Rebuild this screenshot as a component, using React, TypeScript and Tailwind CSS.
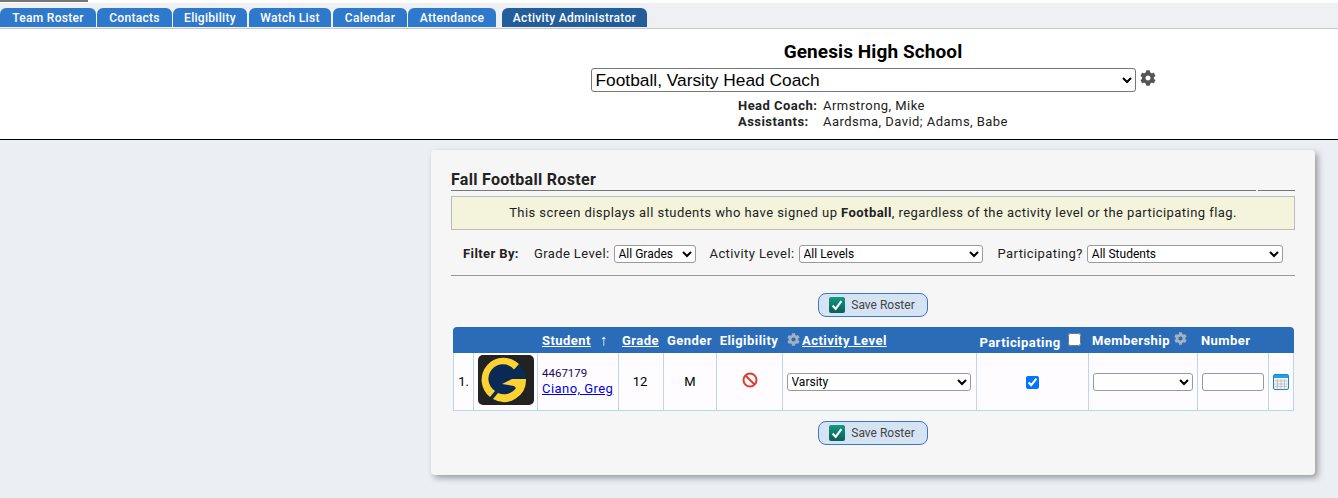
import { FaCog } from 'react-icons/fa';

const tabs = [
  { label: 'Team Roster', w: 'w-[96px]', gap: 'mr-[1px]' },
  { label: 'Contacts', w: 'w-[75px]', gap: 'mr-[1px]' },
  { label: 'Eligibility', w: 'w-[74px]', gap: 'mr-[2px]' },
  { label: 'Watch List', w: 'w-[82px]', gap: 'mr-[2px]' },
  { label: 'Calendar', w: 'w-[74px]', gap: 'mr-[1px]' },
  { label: 'Attendance', w: 'w-[88px]', gap: 'mr-[6px]' },
];

function SaveButton() {
  return (
    <div className="flex justify-center">
      <button className="flex items-center justify-center gap-[6px] pr-[2px] w-[110px] h-[24px] rounded-[8px] border border-[#3a78c9] bg-[#d5e3f3] text-[12px] text-[#444]">
        <span className="w-[16px] h-[16px] rounded-[2px] bg-gradient-to-b from-[#0f9a84] to-[#0a5f57] flex items-center justify-center">
          <svg viewBox="0 0 16 16" className="w-[14px] h-[14px]">
            <path d="M3 8.5 L6.5 12.5 L13 3.5" fill="none" stroke="#fff" strokeWidth="2.4" />
          </svg>
        </span>
        Save Roster
      </button>
    </div>
  );
}

function Logo() {
  return (
    <svg viewBox="0 0 56 50" className="w-[56px] h-[50px] block">
      <rect width="56" height="50" rx="5" fill="#222222" />
      <circle cx="26" cy="25" r="22" fill="#0a2a55" />
      <path d="M41 9 A22 22 0 1 0 12 42 L17 36 A14.5 14.5 0 1 1 36 14.5 Z" fill="#fdd231" />
      <path d="M24 29 L34 24 H48 A22 22 0 0 1 15 44 L20 38 A14.5 14.5 0 0 0 38 33 L36 31 Z" fill="#fdd231" />
    </svg>
  );
}

function Prohibited() {
  return (
    <svg viewBox="0 0 16 16" className="w-[16px] h-[16px] mx-auto">
      <circle cx="8" cy="8" r="6.5" fill="none" stroke="#e23b2e" strokeWidth="2" />
      <path d="M3.5 3.5 L12.5 12.5" stroke="#e23b2e" strokeWidth="2" />
    </svg>
  );
}

function CalendarIcon() {
  return (
    <svg viewBox="0 0 16 16" className="w-[16px] h-[16px] mx-auto">
      <rect x="0.5" y="0.5" width="15" height="15" rx="1.5" fill="#f2f2f2" stroke="#1b86c8" />
      <rect x="1" y="1" width="14" height="3" fill="#22a0e6" />
      <path
        d="M4.5 5 V14.5 M8 5 V14.5 M11.5 5 V14.5 M1.5 7 H14.5 M1.5 10 H14.5 M1.5 12.5 H14.5"
        stroke="#b5b5b5"
        strokeWidth="0.7"
      />
    </svg>
  );
}

const selectCls = 'h-[18px] border border-[#9a9a9a] rounded-[3px] bg-white text-[12px] tracking-normal text-black';
const cellCls = 'border-r border-b border-[#b9d6f2] text-center align-middle p-0';

export default function App() {
  return (
    <div className="min-h-[498px] bg-[#ebeef3] text-[#222] font-['Roboto',sans-serif] overflow-hidden">
      {/* top strip */}
      <div className="h-[3px] bg-white">
        <div className="w-[88px] h-[2px] bg-[#777]" />
      </div>
      <div className="h-[25px] bg-[#eef0f4] border-b border-[#c8c8c8] box-content flex items-end">
        {tabs.map((t) => (
          <div
            key={t.label}
            className={`${t.w} ${t.gap} h-[19px] mb-[1px] rounded-t-[6px] bg-[#2f79cd] text-white text-[12px] font-medium tracking-[0.3px] flex items-center justify-center`}
          >
            {t.label}
          </div>
        ))}
        <div className="w-[145px] h-[19px] mb-[1px] rounded-t-[6px] bg-[#245e9a] text-white text-[12px] font-medium tracking-[0.3px] flex items-center justify-center">
          Activity Administrator
        </div>
      </div>

      {/* school header */}
      <div className="h-[111px] bg-white border-b border-black flex flex-col items-center pl-[408px]">
        <div className="mt-[12px] text-[19px] leading-[22px] font-bold tracking-[0.1px] text-black">Genesis High School</div>
        <div className="mt-[5px] flex items-start">
          <select className="w-[545px] h-[24px] border border-[#777] rounded-[3px] bg-white text-[17.33px] text-black font-['Liberation_Sans',sans-serif]">
            <option>Football, Varsity Head Coach</option>
          </select>
          <FaCog className="ml-[4px] mt-[2px] w-[16px] h-[16px] text-[#555]" />
        </div>
        <div className="mt-[6px] w-[540px] pl-[135px] text-[13px] leading-[16px] tracking-[0.46px] text-[#222]">
          <div className="flex">
            <span className="w-[85px] font-bold">Head Coach:</span>
            <span>Armstrong, Mike</span>
          </div>
          <div className="flex">
            <span className="w-[85px] font-bold">Assistants:</span>
            <span>Aardsma, David; Adams, Babe</span>
          </div>
        </div>
      </div>

      {/* roster card */}
      <div className="ml-[431px] mt-[10px] w-[884px] h-[325px] bg-[#f6f6f6] rounded-[4px] shadow-[3px_3px_6px_rgba(0,0,0,0.35)] px-[20px]">
        <div className="pt-[20px] flex items-end h-[41px] text-[16px] leading-[20px] font-bold text-[#222] tracking-[0.3px]">
          <div className="w-[806px] h-[21px] border-b border-[#777]">Fall Football Roster</div>
          <div className="ml-[2px] w-[37px] h-[21px] border-b border-[#777]" />
        </div>
        <div className="mt-[5px] h-[34px] bg-[#f4f4dc] border border-[#bbb] flex items-center justify-center text-[13px] tracking-[0.44px] text-[#222]">
          <span>
            This screen displays all students who have signed up <b>Football</b>, regardless of the activity level or the participating flag.
          </span>
        </div>

        <div className="h-[46px] pt-[3px] border-b border-[#999] flex items-center text-[13px] tracking-[0.4px]">
          <b className="ml-[12px]">Filter By:</b>
          <span className="ml-[15px]">Grade Level:</span>
          <select className={`${selectCls} ml-[4px] w-[82px]`}>
            <option>All Grades</option>
          </select>
          <span className="ml-[14px]">Activity Level:</span>
          <select className={`${selectCls} ml-[4px] w-[184px]`}>
            <option>All Levels</option>
          </select>
          <span className="ml-[15px]">Participating?</span>
          <select className={`${selectCls} ml-[4px] w-[196px]`}>
            <option>All Students</option>
          </select>
        </div>

        <div className="mt-[17px]">
          <SaveButton />
        </div>

        <table className="mt-[10px] ml-[2px] w-[841px] table-fixed border-separate border-spacing-0 text-[13px]">
          <colgroup>
            <col className="w-[21px]" />
            <col className="w-[64px]" />
            <col className="w-[81px]" />
            <col className="w-[45px]" />
            <col className="w-[53px]" />
            <col className="w-[66px]" />
            <col className="w-[194px]" />
            <col className="w-[112px]" />
            <col className="w-[109px]" />
            <col className="w-[71px]" />
            <col className="w-[25px]" />
          </colgroup>
          <thead>
            <tr className="h-[26px] text-white font-bold tracking-[0.45px]">
              <th className="bg-[#2b6cb8] rounded-tl-[4px]" />
              <th className="bg-[#2b6cb8]" />
              <th className="bg-[#2b6cb8] text-left pl-[4px] pt-[1px] whitespace-nowrap">
                <span className="underline">Student</span>
                <span className="ml-[9px] text-[15px] leading-[15px]">↑</span>
              </th>
              <th className="bg-[#2b6cb8] underline pt-[1px] pr-[2px]">Grade</th>
              <th className="bg-[#2b6cb8] pt-[1px] pr-[2px]">Gender</th>
              <th className="bg-[#2b6cb8] pt-[1px] pr-[2px]">Eligibility</th>
              <th className="bg-[#2b6cb8] text-left pl-[4px] pt-[1px] whitespace-nowrap">
                <FaCog className="inline w-[13px] h-[13px] text-[#a3b1bf] mr-[2px] align-[-1px]" />
                <span className="underline">Activity Level</span>
              </th>
              <th className="bg-[#2b6cb8] whitespace-nowrap pt-[5px] pr-[6px]">
                Participating
                <input type="checkbox" className="ml-[7px] w-[13px] h-[13px] align-[1px]" />
              </th>
              <th className="bg-[#2b6cb8] text-left pl-[3px] pt-[1px] whitespace-nowrap">
                Membership
                <FaCog className="inline w-[13px] h-[13px] text-[#a3b1bf] ml-[4px] align-[0px]" />
              </th>
              <th className="bg-[#2b6cb8] text-left pl-[3px] pt-[1px]">Number</th>
              <th className="bg-[#2b6cb8] rounded-tr-[4px]" />
            </tr>
          </thead>
          <tbody>
            <tr className="h-[58px] bg-[#fefcff] text-black">
              <td className={`${cellCls} border-l`}>1.</td>
              <td className={cellCls}>
                <div className="flex justify-center -mt-[4px]">
                  <Logo />
                </div>
              </td>
              <td className={`${cellCls} text-left pl-[4px]`}>
                <div className="-mt-[2px] text-[11.5px] leading-[16px] text-[#200a5c]">4467179</div>
                <a href="#" className="block text-[#0000ee] underline leading-[16px] tracking-[0.45px] whitespace-nowrap">
                  Ciano, Greg
                </a>
              </td>
              <td className={`${cellCls} pr-[2px]`}>12</td>
              <td className={cellCls}>M</td>
              <td className={cellCls}>
                <div className="-mt-[4px]">
                  <Prohibited />
                </div>
              </td>
              <td className={`${cellCls} pr-[2px]`}>
                <select className={`${selectCls} w-[184px]`}>
                  <option>Varsity</option>
                </select>
              </td>
              <td className={cellCls}>
                <input type="checkbox" defaultChecked className="w-[13px] h-[13px] align-middle" />
              </td>
              <td className={cellCls}>
                <select className={`${selectCls} w-[100px]`}>
                  <option></option>
                </select>
              </td>
              <td className={cellCls}>
                <input className="w-[62px] h-[18px] border border-[#9a9a9a] rounded-[3px] bg-white align-middle" />
              </td>
              <td className={cellCls}>
                <CalendarIcon />
              </td>
            </tr>
          </tbody>
        </table>

        <div className="mt-[10px]">
          <SaveButton />
        </div>
      </div>
    </div>
  );
}
